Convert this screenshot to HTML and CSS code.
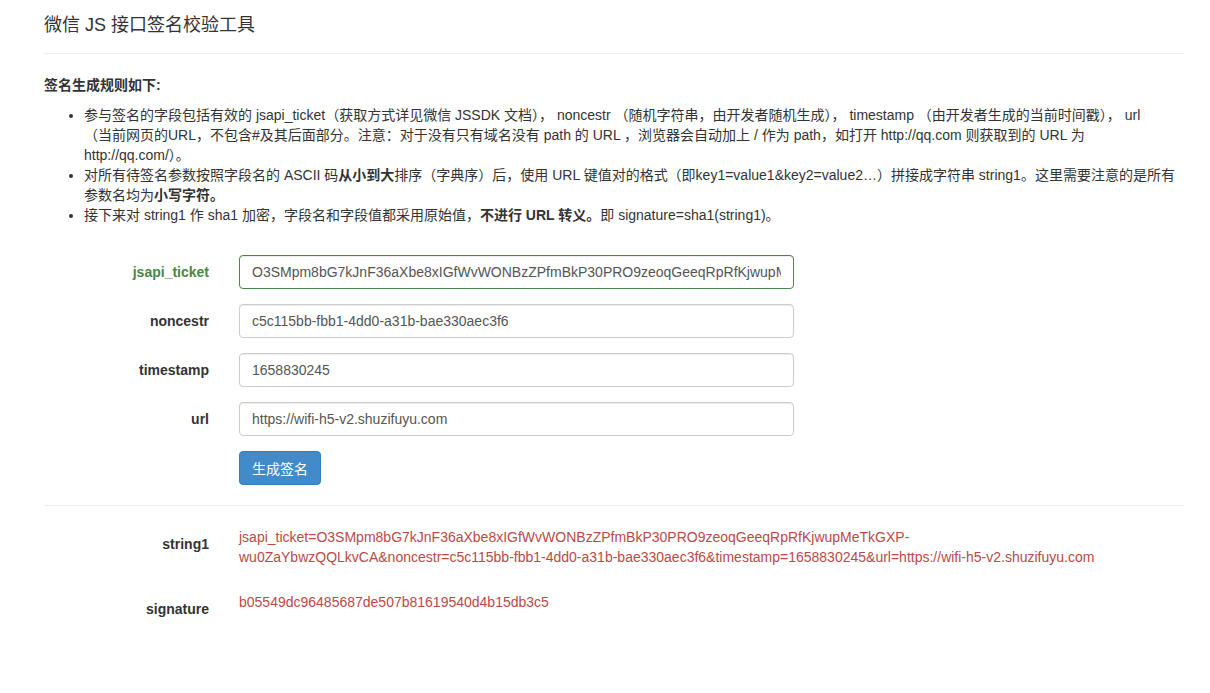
FILE: index.html
```html
<!DOCTYPE html>
<html>
<head>
<meta charset="utf-8">
<title>微信 JS 接口签名校验工具</title>
<link rel="stylesheet" href="styles.css">
</head>
<body>
<div class="container">
    <h1 class="page-title">微信 JS 接口签名校验工具</h1>

    <p class="rule-title">签名生成规则如下:</p>
    <ul class="rule-list">
        <li>参与签名的字段包括有效的 jsapi_ticket（获取方式详见微信 JSSDK 文档）， noncestr （随机字符串，由开发者随机生成）， timestamp （由开发者生成的当前时间戳）， url<br>（当前网页的URL，不包含#及其后面部分。注意：对于没有只有域名没有 path 的 URL ，浏览器会自动加上 / 作为 path，如打开 http://qq.com 则获取到的 URL 为<br>http://qq.com/）。</li>
        <li>对所有待签名参数按照字段名的 ASCII 码<b>从小到大</b>排序（字典序）后，使用 URL 键值对的格式（即key1=value1&amp;key2=value2…）拼接成字符串 string1。这里需要注意的是所有参数名均为<b>小写字符。</b></li>
        <li>接下来对 string1 作 sha1 加密，字段名和字段值都采用原始值，<b>不进行 URL 转义。</b>即 signature=sha1(string1)。</li>
    </ul>

    <form class="sign-form">
        <div class="form-row has-success">
            <label class="row-label" for="ticket">jsapi_ticket</label>
            <input class="field" id="ticket" type="text" value="O3SMpm8bG7kJnF36aXbe8xIGfWvWONBzZPfmBkP30PRO9zeoqGeeqRpRfKjwupMeTkGXP-wu0ZaYbwzQQLkvCA">
        </div>
        <div class="form-row">
            <label class="row-label" for="noncestr">noncestr</label>
            <input class="field" id="noncestr" type="text" value="c5c115bb-fbb1-4dd0-a31b-bae330aec3f6">
        </div>
        <div class="form-row">
            <label class="row-label" for="timestamp">timestamp</label>
            <input class="field" id="timestamp" type="text" value="1658830245">
        </div>
        <div class="form-row">
            <label class="row-label" for="url">url</label>
            <input class="field" id="url" type="text" value="https://wifi-h5-v2.shuzifuyu.com">
        </div>
        <div class="form-row">
            <span></span>
            <div><button class="btn-primary" type="button">生成签名</button></div>
        </div>
    </form>

    <hr class="divider">

    <div class="result">
        <div class="result-row">
            <span class="row-label">string1</span>
            <p class="result-value">jsapi_ticket=O3SMpm8bG7kJnF36aXbe8xIGfWvWONBzZPfmBkP30PRO9zeoqGeeqRpRfKjwupMeTkGXP-wu0ZaYbwzQQLkvCA&amp;noncestr=c5c115bb-fbb1-4dd0-a31b-bae330aec3f6&amp;timestamp=1658830245&amp;url=https://wifi-h5-v2.shuzifuyu.com</p>
        </div>
        <div class="result-row">
            <span class="row-label">signature</span>
            <p class="result-value">b05549dc96485687de507b81619540d4b15db3c5</p>
        </div>
    </div>
</div>
</body>
</html>
```

FILE: styles.css
```css
/* page base */
body {
    margin: 0;
    font-family: "Liberation Sans", Arial, "Noto Sans CJK SC", sans-serif;
    font-size: 14px;
    line-height: 20px;
    color: #333;
    background-color: #fff;
}

.container {
    width: 1140px;
    padding-left: 44px;
}

.page-title {
    margin: 0;
    padding: 12px 0 15px;
    font-size: 18px;
    font-weight: normal;
    line-height: 26px;
    color: #333;
    border-bottom: 1px solid #eee;
}

.rule-title {
    margin: 21px 0 10px;
    font-weight: bold;
}

.rule-list {
    margin: 0 0 10px;
    padding-left: 40px;
}

/* form */
.sign-form {
    padding-top: 20px;
}

.form-row {
    display: grid;
    grid-template-columns: 165px 555px;
    column-gap: 30px;
    margin-bottom: 15px;
}

.row-label {
    padding-top: 7px;
    text-align: right;
    font-weight: bold;
}

.field {
    box-sizing: border-box;
    width: 555px;
    height: 34px;
    padding: 6px 12px;
    font-family: inherit;
    font-size: 14px;
    color: #555;
    background-color: #fff;
    border: 1px solid #ccc;
    border-radius: 4px;
    box-shadow: inset 0 1px 1px rgba(0, 0, 0, 0.075);
}

.has-success .row-label {
    color: #468847;
}

.has-success .field {
    border-color: #468847;
}

.btn-primary {
    height: 34px;
    padding: 6px 12px;
    font-family: inherit;
    font-size: 14px;
    color: #fff;
    background-color: #428bca;
    border: 1px solid #357ebd;
    border-radius: 4px;
}

.divider {
    margin: 20px 0 21px;
    border: 0;
    border-top: 1px solid #eee;
}

/* result */
.result-row {
    display: grid;
    grid-template-columns: 165px 945px;
    column-gap: 30px;
    margin-bottom: 15px;
}

.result-value {
    margin: 0 0 10px;
    color: #b94a48;
}
```
